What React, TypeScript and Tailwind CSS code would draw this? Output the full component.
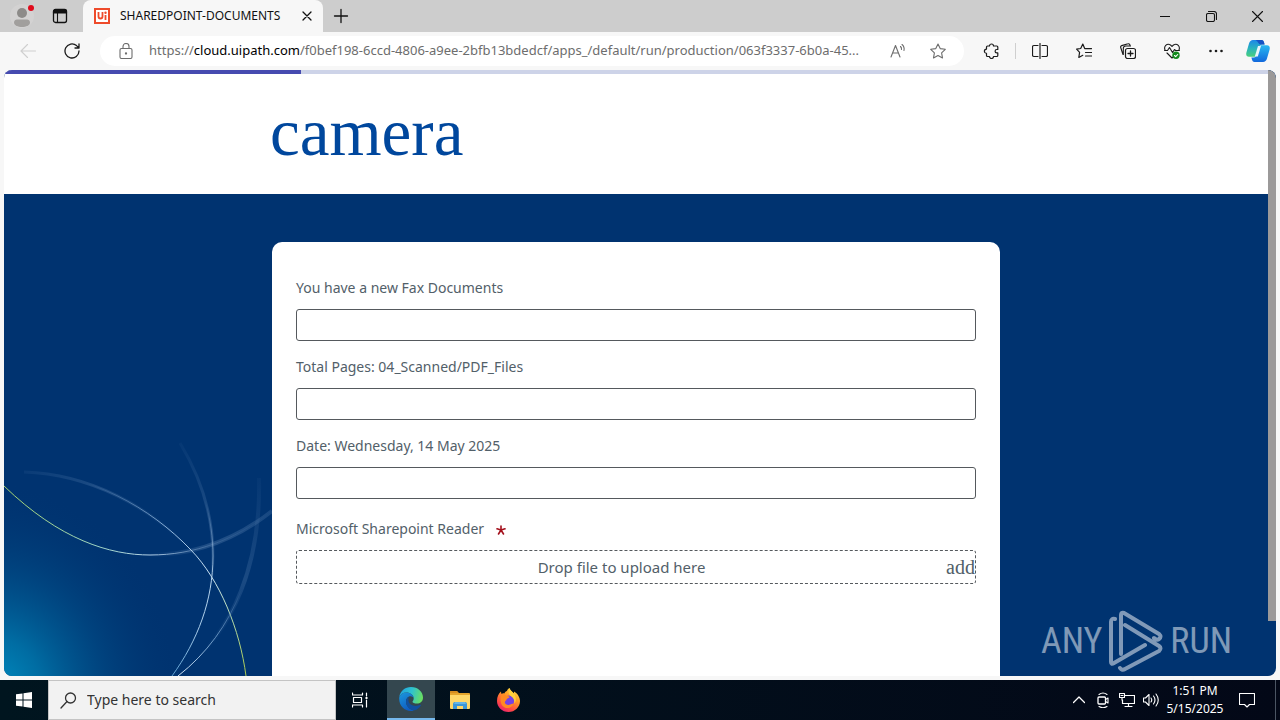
import type { ReactNode } from "react";

type IconProps = {
  size?: number;
  className?: string;
  children: ReactNode;
};

// 1px line icon, drawn on a grid that is as large as the icon itself
function Icon({ size = 16, className = "", children }: IconProps) {
  return (
    <svg
      width={size}
      height={size}
      viewBox={`0 0 ${size} ${size}`}
      fill="none"
      stroke="currentColor"
      strokeWidth="1.1"
      strokeLinecap="round"
      strokeLinejoin="round"
      className={`shrink-0 ${className}`}
      aria-hidden="true"
    >
      {children}
    </svg>
  );
}

type IconButtonProps = {
  label: string;
  className?: string;
  children: ReactNode;
};

function IconButton({ label, className = "w-11", children }: IconButtonProps) {
  return (
    <button
      type="button"
      aria-label={label}
      className={`flex h-full shrink-0 items-center justify-center ${className}`}
    >
      {children}
    </button>
  );
}

function TabBar() {
  return (
    <div className="flex h-8 shrink-0 items-stretch bg-[#cdcdcd] text-[#111]">
      <IconButton label="Profile">
        <svg width="24" height="24" viewBox="0 0 24 24" aria-hidden="true">
          <circle cx="12" cy="12" r="12" fill="#d3d2d2" />
          <circle cx="12" cy="9" r="5" fill="#8d8b89" />
          <path d="M4 18.500c0-2 1.500-3 3-3h10c1.500 0 3 1 3 3 0 3-4 4.500-8 4.500s-8-1.500-8-4.500z" fill="#a19f9d" />
          <circle cx="21" cy="4" r="3" fill="#e00b1c" />
        </svg>
      </IconButton>
      <IconButton label="Tab actions" className="w-8">
        <Icon>
          <rect x="1.500" y="1.500" width="13" height="13" rx="2" strokeWidth="1.300" />
          <path d="M1.500 3.500a2 2 0 0 1 2-2h9a2 2 0 0 1 2 2V5h-13z" fill="currentColor" />
          <path d="M5.500 5v9" />
        </Icon>
      </IconButton>
      <div className="ml-[7px] flex w-60 items-center rounded-t-lg bg-[#f7f7f7] pl-[11px]">
        <svg width="16" height="16" viewBox="0 0 16 16" aria-hidden="true">
          <rect x="1" y="1" width="14" height="14" fill="#fff" stroke="#ee4b2b" strokeWidth="2" />
          <path d="M4.500 4v4.500a2 2 0 0 0 4 0V4M11.500 7v5" fill="none" stroke="#ee4b2b" strokeWidth="1.800" />
          <circle cx="11.500" cy="4.700" r="1.200" fill="#ee4b2b" />
        </svg>
        <span className="ml-2.5 flex-1 truncate text-xs">SHAREDPOINT-DOCUMENTS</span>
        <IconButton label="Close tab" className="w-8">
          <Icon size={10}>
            <path d="M1 1l8 8M9 1L1 9" strokeWidth="1.300" />
          </Icon>
        </IconButton>
      </div>
      <IconButton label="New tab" className="w-9">
        <Icon>
          <path d="M8 1.500v13M1.500 8h13" strokeWidth="1.300" />
        </Icon>
      </IconButton>
      <div className="ml-auto flex">
        <IconButton label="Minimize" className="w-[46px]">
          <Icon size={10}>
            <path d="M0 5.500h10" />
          </Icon>
        </IconButton>
        <IconButton label="Restore" className="w-[46px]">
          <Icon size={11}>
            <rect x="0.500" y="2.500" width="8" height="8" rx="1.500" />
            <path d="M2.500 0.500H8a2.500 2.500 0 0 1 2.500 2.500v5.500" />
          </Icon>
        </IconButton>
        <IconButton label="Close" className="w-[46px]">
          <Icon size={11}>
            <path d="M0.500 0.500l10 10M10.500 0.500l-10 10" />
          </Icon>
        </IconButton>
      </div>
    </div>
  );
}

function CopilotLogo() {
  return (
    <svg width="24" height="22" viewBox="0 0 24 22" aria-hidden="true">
      <defs>
        <linearGradient id="cp-left" x1="0" y1="0" x2="0" y2="1">
          <stop offset="0" stopColor="#1c86e8" />
          <stop offset="0.500" stopColor="#29b3bd" />
          <stop offset="1" stopColor="#4ad07c" />
        </linearGradient>
        <linearGradient id="cp-right" x1="0" y1="0" x2="0" y2="1">
          <stop offset="0" stopColor="#27b9f1" />
          <stop offset="1" stopColor="#1268dc" />
        </linearGradient>
      </defs>
      <path d="M7 0h8.500c1.300 0 2 .8 2.400 2l.7 2.500h-2.500c-1.300 0-2.200.7-2.600 2L10.700 15c-.4 1.300-1 1.800-2.400 1.800H3C.6 16.800-.2 15 .4 12.500L3 3.500C3.700 1.200 5 0 7 0z" fill="url(#cp-left)" />
      <path d="M17 22H8.500c-1.300 0-2-.8-2.400-2l-.7-2.500h2.500c1.300 0 2.200-.7 2.600-2L13.300 7c.4-1.300 1-1.800 2.400-1.800H21c2.400 0 3.200 1.800 2.600 4.300L21 18.500c-.7 2.300-2 3.500-4 3.500z" fill="url(#cp-right)" />
      <path d="M7 0h8.500c1.300 0 2 .8 2.400 2l.7 2.500h-4.100C12.500 4.500 12 1 9.500 0z" fill="#1553c4" />
      <path d="M12 6h3L11.800 16.500h-3z" fill="#e8f5fb" />
    </svg>
  );
}

function Toolbar() {
  return (
    <div className="flex h-[38px] shrink-0 items-center bg-[#f7f7f7] pl-1.5 pr-0.5 text-[#1b1b1b]">
      <IconButton label="Back">
        <Icon className="text-[#cfcfcf]">
          <path d="M15.500 8H1M7.500 1.500L1 8l6.500 6.500" />
        </Icon>
      </IconButton>
      <IconButton label="Refresh">
        <Icon>
          <path d="M15 8a7 7 0 1 1-2.500-5.400L15 5M15 1v4h-4" strokeWidth="1.300" />
        </Icon>
      </IconButton>
      <div className="ml-1.5 flex h-[30px] min-w-0 flex-1 items-center rounded-full bg-white pl-1 pr-1.5 text-[#6d6d6d]">
        <IconButton label="Site information">
          <Icon>
            <rect x="2" y="5.500" width="12" height="10" rx="1.500" />
            <path d="M5 5.500V3.500a3 3 0 0 1 6 0v2" />
            <circle cx="8" cy="10.500" r="0.600" fill="currentColor" />
          </Icon>
        </IconButton>
        <span className="ml-px min-w-0 flex-1 overflow-hidden whitespace-nowrap text-[13px]">
          https://<span className="text-black">cloud.uipath.com</span>
          /f0bef198-6ccd-4806-a9ee-2bfb13bdedcf/apps_/default/run/production/063f3337-6b0a-45...
        </span>
        <IconButton label="Read aloud" className="w-10">
          <Icon>
            <path d="M1 14L5.500 2.500 10 14M2.500 10h6M10.500 3.500c.8.800 1.200 1.800 1 3M12 1.500c1.800 1.500 2.500 3.500 2 6" />
          </Icon>
        </IconButton>
        <IconButton label="Add to favorites" className="w-10">
          <Icon>
            <path d="M8 1l2.200 4.600 5.100.7-3.700 3.500.9 5.100L8 12.500l-4.500 2.400.9-5.100L.7 6.300l5.100-.7z" />
          </Icon>
        </IconButton>
      </div>
      <div className="ml-[5px] flex h-full items-center">
        <IconButton label="Extensions">
          <Icon>
            <path d="M4.500 3h2a2 2 0 0 1 4 0h3.300a1 1 0 0 1 1 1v2.500h-1a1.700 1.700 0 0 0 0 3.400h1v2.600a1 1 0 0 1-1 1h-3.300a2 2 0 0 1-4 0h-2a1 1 0 0 1-1-1V10.300a2.100 2.100 0 0 1 0-4.200V4a1 1 0 0 1 1-1z" strokeWidth="1.200" />
          </Icon>
        </IconButton>
        <div className="mx-0.5 h-4 w-px bg-[#cfcfcf]" />
        <IconButton label="Split screen">
          <Icon>
            <path d="M6 2.500H2a1.500 1.500 0 0 0-1.500 1.500v8A1.500 1.500 0 0 0 2 13.500h4M10 2.500h4a1.500 1.500 0 0 1 1.500 1.500v8a1.500 1.500 0 0 1-1.500 1.500h-4M8 0.500v15" strokeWidth="1.200" />
          </Icon>
        </IconButton>
        <IconButton label="Favorites">
          <Icon>
            <path d="M9.500 5.600H8.700L6.800 1 4.700 5.500.6 6.200l3 3.100-.8 5.200 4-2.200M9.500 5.600h6M9.500 9.500h6M9.500 13h6" strokeWidth="1.200" />
          </Icon>
        </IconButton>
        <IconButton label="Collections">
          <Icon>
            <path d="M3 11.500L.7 4.500a1.500 1.500 0 0 1 1-1.900L8 .8a1.500 1.500 0 0 1 1.900 1L10.200 3M3.300 11.500V5.500a2.500 2.500 0 0 1 2.500-2.500h4.700" />
            <rect x="5.500" y="5.500" width="10" height="10" rx="2" strokeWidth="1.200" />
            <path d="M10.500 8v5M8 10.500h5" strokeWidth="1.300" />
          </Icon>
        </IconButton>
        <IconButton label="Browser essentials">
          <Icon>
            <path d="M1 7C-.5 3 3 .5 5.500 1.500 7 2 8 3.500 8 3.500S9 2 10.500 1.500C13 .5 16.500 3 15 7M3 10l5 5 1-1M.5 7.500h3l2-3 3 5 2-3 1 1h4" />
            <circle cx="12" cy="12.300" r="3.700" fill="#138a1d" stroke="none" />
            <path d="M10.500 12.500l1.200 1.200 2-2.200" stroke="#fff" />
          </Icon>
        </IconButton>
        <IconButton label="Settings and more">
          <Icon>
            <g fill="currentColor" stroke="none">
              <circle cx="2.500" cy="8" r="1.300" />
              <circle cx="8" cy="8" r="1.300" />
              <circle cx="13.500" cy="8" r="1.300" />
            </g>
          </Icon>
        </IconButton>
        <IconButton label="Copilot" className="w-10">
          <CopilotLogo />
        </IconButton>
      </div>
    </div>
  );
}

// Light trails and the glow in the lower left corner of the page
function Swooshes() {
  return (
    <svg
      width="268"
      height="276"
      viewBox="4 400 268 276"
      fill="none"
      className="absolute bottom-0 left-0"
      aria-hidden="true"
    >
      <defs>
        <radialGradient id="glow" gradientUnits="userSpaceOnUse" cx="0" cy="0" r="1" gradientTransform="translate(-4 690) rotate(-12) scale(185 210)">
          <stop offset="0" stopColor="#008cc0" />
          <stop offset="0.250" stopColor="#0080b4" stopOpacity="0.750" />
          <stop offset="0.600" stopColor="#005f98" stopOpacity="0.350" />
          <stop offset="1" stopColor="#003370" stopOpacity="0" />
        </radialGradient>
        <linearGradient id="trail-a" gradientUnits="userSpaceOnUse" x1="4" y1="0" x2="272" y2="0">
          <stop offset="0" stopColor="#a5d36b" />
          <stop offset="0.350" stopColor="#9fd6c4" />
          <stop offset="0.550" stopColor="#b5d2ea" />
          <stop offset="0.800" stopColor="#5f86b4" stopOpacity="0.300" />
          <stop offset="1" stopColor="#5f86b4" stopOpacity="0" />
        </linearGradient>
        <linearGradient id="haze-a" gradientUnits="userSpaceOnUse" x1="150" y1="0" x2="272" y2="0">
          <stop offset="0" stopColor="#5f86b4" stopOpacity="0" />
          <stop offset="0.500" stopColor="#5f86b4" stopOpacity="0.350" />
          <stop offset="1" stopColor="#5f86b4" stopOpacity="0.250" />
        </linearGradient>
        <linearGradient id="trail-b" gradientUnits="userSpaceOnUse" x1="90" y1="480" x2="246" y2="676">
          <stop offset="0" stopColor="#7fa5cf" stopOpacity="0" />
          <stop offset="0.350" stopColor="#8fb5dc" />
          <stop offset="0.600" stopColor="#cfe6f5" />
          <stop offset="0.780" stopColor="#b6dcae" />
          <stop offset="1" stopColor="#a9c94c" />
        </linearGradient>
        <linearGradient id="haze-b" gradientUnits="userSpaceOnUse" x1="24" y1="0" x2="180" y2="0">
          <stop offset="0" stopColor="#5f86b4" stopOpacity="0.100" />
          <stop offset="0.500" stopColor="#5f86b4" stopOpacity="0.300" />
          <stop offset="1" stopColor="#5f86b4" stopOpacity="0" />
        </linearGradient>
        <linearGradient id="trail-c" gradientUnits="userSpaceOnUse" x1="0" y1="500" x2="0" y2="676">
          <stop offset="0" stopColor="#7fa5cf" stopOpacity="0" />
          <stop offset="0.450" stopColor="#b9d6ee" />
          <stop offset="0.750" stopColor="#a9cdea" />
          <stop offset="1" stopColor="#5a9ed0" />
        </linearGradient>
        <linearGradient id="haze-c" gradientUnits="userSpaceOnUse" x1="0" y1="440" x2="0" y2="590">
          <stop offset="0" stopColor="#5f86b4" stopOpacity="0.050" />
          <stop offset="0.600" stopColor="#5f86b4" stopOpacity="0.350" />
          <stop offset="1" stopColor="#5f86b4" stopOpacity="0" />
        </linearGradient>
        <linearGradient id="trail-d" gradientUnits="userSpaceOnUse" x1="0" y1="590" x2="0" y2="676">
          <stop offset="0" stopColor="#7fa5cf" stopOpacity="0" />
          <stop offset="0.600" stopColor="#8ab4dc" stopOpacity="0.800" />
          <stop offset="1" stopColor="#d5e8f8" />
        </linearGradient>
        <linearGradient id="haze-d" gradientUnits="userSpaceOnUse" x1="0" y1="476" x2="0" y2="650">
          <stop offset="0" stopColor="#5f86b4" stopOpacity="0.050" />
          <stop offset="0.600" stopColor="#5f86b4" stopOpacity="0.280" />
          <stop offset="1" stopColor="#5f86b4" stopOpacity="0" />
        </linearGradient>
      </defs>
      <rect x="4" y="400" width="268" height="276" fill="url(#glow)" />
      <path d="M4 486C60 540 110 555 150 555C195 555 235 540 272 511" stroke="url(#haze-a)" strokeWidth="4" />
      <path d="M4 486C60 540 110 555 150 555C195 555 235 540 272 511" stroke="url(#trail-a)" />
      <path d="M24 472C90 474 150 507 191 550C220 580 240 630 246 676" stroke="url(#haze-b)" strokeWidth="3" />
      <path d="M24 472C90 474 150 507 191 550C220 580 240 630 246 676" stroke="url(#trail-b)" />
      <path d="M180 443C203 481 213 520 213 556C213 600 198 640 172 676" stroke="url(#haze-c)" strokeWidth="3" />
      <path d="M180 443C203 481 213 520 213 556C213 600 198 640 172 676" stroke="url(#trail-c)" />
      <path d="M259 478C261 560 236 631 178 676" stroke="url(#haze-d)" strokeWidth="4" />
      <path d="M259 478C261 560 236 631 178 676" stroke="url(#trail-d)" />
    </svg>
  );
}

function Watermark() {
  return (
    <div className="absolute bottom-1 right-9 flex items-center gap-1.5 font-['Roboto_Condensed','Liberation_Sans_Narrow','Liberation_Sans',sans-serif] text-4xl leading-none text-white/50">
      <span>ANY</span>
      <svg
        width="56"
        height="62"
        viewBox="0 0 56 62"
        fill="none"
        stroke="currentColor"
        strokeWidth="4"
        strokeLinecap="round"
        strokeLinejoin="round"
        aria-hidden="true"
      >
        <path d="M7 9q-4-1-4 3v40q0 3 3 1l31-18M13 44V5q0-3 3-2l35 21q3 3 0 5-2 2-5-1M17 15l34 21q3 2 0 5L17 59q-3 2-5-1" />
      </svg>
      <span>RUN</span>
    </div>
  );
}

const fields = [
  { id: "fax", label: "You have a new Fax Documents" },
  { id: "pages", label: "Total Pages: 04_Scanned/PDF_Files" },
  { id: "date", label: "Date: Wednesday, 14 May 2025" },
];

function UploadForm() {
  return (
    <form className="mx-auto mt-12 flex w-full max-w-[728px] flex-1 flex-col rounded-t-[10px] bg-white px-6 pt-9 text-sm leading-5 text-[#526069]">
      {fields.map((field) => (
        <div key={field.id} className="mb-4 flex flex-col">
          <label htmlFor={field.id} className="mb-[11px]">
            {field.label}
          </label>
          <input
            id={field.id}
            type="text"
            className="h-8 rounded-[3px] border border-[#55595d] bg-white px-2 outline-none"
          />
        </div>
      ))}
      <div className="mt-1 flex flex-col">
        <span id="reader-label" className="mb-[11px] flex gap-3">
          Microsoft Sharepoint Reader
          <Icon size={10} className="mt-1.5 text-[#a4101c]">
            <path d="M5 5V1M5 5L1 3.800M5 5l4-1.200M5 5L2.500 9M5 5l2.500 4" strokeWidth="1.600" />
          </Icon>
        </span>
        <button
          type="button"
          aria-labelledby="reader-label"
          className="flex h-[34px] items-center rounded-[3px] border border-dashed border-[#55595d]"
        >
          <span className="flex-1 text-[15px]">Drop file to upload here</span>
          <span className="font-['Liberation_Serif',serif] text-xl">add</span>
        </button>
      </div>
    </form>
  );
}

function Page() {
  return (
    <div className="mx-1 mb-1 flex min-h-0 flex-1 overflow-hidden rounded-lg bg-[#003370]">
      <main className="flex min-w-0 flex-1 flex-col">
        <div className="h-1 shrink-0 bg-[#cdd3e8]">
          <div className="h-full w-[23.5%] bg-[#464bb0]" />
        </div>
        <header className="h-[120px] shrink-0 bg-white">
          <div className="mx-auto flex h-full w-full max-w-[732px] items-center pb-1 font-['Liberation_Serif',serif] text-[67px] leading-none text-[#00479d]">
            camera
          </div>
        </header>
        <section className="relative flex min-h-0 flex-1 flex-col">
          <Swooshes />
          <UploadForm />
          <Watermark />
        </section>
      </main>
      <div className="w-2 shrink-0">
        <div className="h-[91%] rounded-tr-lg bg-[#9b9999]" />
      </div>
    </div>
  );
}

function EdgeLogo() {
  return (
    <svg width="24" height="24" viewBox="0 0 24 24" aria-hidden="true">
      <defs>
        <linearGradient id="edge-top" x1="0" y1="0.300" x2="1" y2="0.500">
          <stop offset="0" stopColor="#1fa3e0" />
          <stop offset="0.500" stopColor="#2fc2cf" />
          <stop offset="1" stopColor="#6adf60" />
        </linearGradient>
        <linearGradient id="edge-left" x1="0" y1="0" x2="0.500" y2="1">
          <stop offset="0" stopColor="#1b98dd" />
          <stop offset="1" stopColor="#0f5cc0" />
        </linearGradient>
      </defs>
      <path d="M.3 10C1.200 4 6 0 12 0c7 0 12 5 12 10.500 0 4-3 6-6 6-2.500 0-4.500-.8-4.500-1.800 0-.7 1.200-1 1.200-3.200C14.700 8 11 5.500 7.500 5.500 4 5.500 1.500 7.500.3 10z" fill="url(#edge-top)" />
      <path d="M.3 10C1.500 7.500 4 5.500 7.500 5.500c3.800 0 7 2.500 7.200 5.500-.6-1-1.700-1.700-3-1.700C8.500 9.300 7 12 7 14.500c0 4.500 3.500 8 8 9-1 .4-2 .5-3 .5C5 24-.7 18 .3 10z" fill="url(#edge-left)" />
      <path d="M9.500 10C8 11 7 12.700 7 14.500c0 5 4.500 9 9 8.800 2.500-1 4.500-2.600 6-5 .2-.5-.2-.7-.6-.5-5.500 2.700-11.500.2-11.900-4.300-.1-1.300 0-2.500 0-3.500z" fill="#11509f" />
    </svg>
  );
}

function ExplorerLogo() {
  return (
    <svg width="22" height="20" viewBox="0 0 22 20" aria-hidden="true">
      <path d="M1 2q0-1 1-1h6l2 2h10q1 0 1 1v4H1z" fill="#e5a52b" />
      <path d="M1 2q0-1 1-1h6l1 2H1z" fill="#d78e1e" />
      <path d="M1 5h20v13q0 1-1 1H2q-1 0-1-1z" fill="#ffd868" />
      <path d="M4 19v-5q0-2 2-2h10q2 0 2 2v5h-4v-3H8v3z" fill="#3d97d6" />
      <path d="M6 12h10l1 2H5z" fill="#64b5e6" />
    </svg>
  );
}

function FirefoxLogo() {
  return (
    <svg width="23" height="24" viewBox="0 0 23 24" aria-hidden="true">
      <defs>
        <linearGradient id="fx-body" x1="0.850" y1="0" x2="0.250" y2="1">
          <stop offset="0" stopColor="#ffe545" />
          <stop offset="0.400" stopColor="#ff9a27" />
          <stop offset="0.750" stopColor="#ff4a43" />
          <stop offset="1" stopColor="#e8226f" />
        </linearGradient>
      </defs>
      <path d="M12.500 0c.5 2.500 3 3.500 4.500 5.500V3.500c3 1.500 6 5.500 6 9.500 0 6-5 11-11.500 11S0 19 0 13c0-4 1.500-7.500 4-9.500 0 1 .2 1.800.6 2.500.7-.6 1.700-.8 2.700-.5C8 4 9 3 10 3c.3-1.300 1.300-2.400 2.500-3z" fill="url(#fx-body)" />
      <circle cx="12" cy="12.700" r="5.200" fill="#7542e5" />
      <path d="M4 7.500c2-1.500 4-1 5.500.5 1.500 0 2.800.2 3 1-.2 1-2 1.300-2.700 2-.3 1.500-2 1.800-2 3.500.4 2 3 3.200 5.500 2 1.300-.6 2-1.200 3-.5-1 3-4 4.500-7 4-4-.7-7-5-5.300-12.500z" fill="#ff8a22" />
      <path d="M12.500 0c.5 2.500 3.500 3.700 5 6.500 2 3.500 1.500 7 0 9 .2-4-1.500-6-3.700-7.500C11.500 6.500 11 3 12.500 0z" fill="#ffd23c" />
    </svg>
  );
}

function Taskbar() {
  return (
    <footer className="flex h-10 shrink-0 items-stretch bg-linear-to-r from-[#00151f] to-[#030817] text-white">
      <IconButton label="Start" className="w-12">
        <svg width="16" height="16" viewBox="0 0 16 16" fill="#fff" aria-hidden="true">
          <path d="M0 2.300L6.500 1.400v6.100H0zM7.500 1.200L16 0v7.500H7.500zM0 8.500h6.500v6.100L0 13.700zM7.500 8.500H16V16l-8.500-1.200z" />
        </svg>
      </IconButton>
      <label className="flex w-72 items-center gap-2.5 border border-[#c4c4c4] bg-[#f2f2f2] pl-[11px] text-[#333]">
        <Icon size={17}>
          <circle cx="10.500" cy="6" r="5" strokeWidth="1.300" />
          <path d="M7 9.500L1 16" strokeWidth="1.300" />
        </Icon>
        <input
          type="text"
          aria-label="Search"
          placeholder="Type here to search"
          className="min-w-0 flex-1 bg-transparent text-sm outline-none placeholder:text-[#333]"
        />
      </label>
      <IconButton label="Task view" className="w-[51px] pr-1">
        <Icon>
          <path d="M0.500 1v2h10V1M0.500 15v-2h10v2M1.500 5.500h8v5h-8zM14.500 1v3M14.500 8v7" strokeWidth="1.200" />
          <rect x="13.500" y="5" width="2" height="2" fill="currentColor" stroke="none" />
        </Icon>
      </IconButton>
      <IconButton label="Microsoft Edge" className="w-12 border-b-2 border-[#76b9ed] bg-[#34474f]">
        <EdgeLogo />
      </IconButton>
      <IconButton label="File Explorer" className="w-[49px]">
        <ExplorerLogo />
      </IconButton>
      <IconButton label="Firefox" className="w-[49px]">
        <FirefoxLogo />
      </IconButton>
      <div className="ml-auto flex items-stretch">
        <IconButton label="Show hidden icons" className="w-6">
          <Icon size={12}>
            <path d="M0.500 8.500L6 3l5.500 5.500" strokeWidth="1.300" />
          </Icon>
        </IconButton>
        <IconButton label="Meet Now" className="w-6">
          <Icon>
            <rect x="3" y="5" width="7.500" height="7" rx="1" strokeWidth="1.300" />
            <path d="M10.500 7.500l2.500-1.500v5l-2.500-1.500M4 2.500Q8 -.5 12 2.500M4 14.500Q8 17 12 14.500" />
          </Icon>
        </IconButton>
        <IconButton label="Network" className="w-6">
          <Icon>
            <path d="M5.500 3.500h10v8H3.500V8M9.500 11.500v3M6 14.500h7" strokeWidth="1.200" />
            <path d="M0.500 1.500h5v4h-5zM3 5.500V8M2 3.500h2" />
          </Icon>
        </IconButton>
        <IconButton label="Volume" className="w-6">
          <Icon>
            <path d="M0.500 6h2L6 2.500v11L2.500 10h-2zM8 6q1.500 2 0 4M10.500 4q3 4 0 8M13 2q4.500 6 0 12" />
          </Icon>
        </IconButton>
        <div className="flex w-16 flex-col items-center justify-center text-xs leading-[18px]">
          <time>1:51 PM</time>
          <time>5/15/2025</time>
        </div>
        <IconButton label="Notifications" className="w-10">
          <Icon>
            <path d="M0.500 1.500h15v11h-5L8 15l-2.500-2.500h-5z" />
          </Icon>
        </IconButton>
        <div className="ml-2 w-[5px] border-l border-[#4b5563]" />
      </div>
    </footer>
  );
}

export default function App() {
  return (
    <div className="flex h-screen flex-col overflow-hidden bg-[#f7f7f7] font-['Noto_Sans',sans-serif]">
      <TabBar />
      <Toolbar />
      <Page />
      <Taskbar />
    </div>
  );
}
